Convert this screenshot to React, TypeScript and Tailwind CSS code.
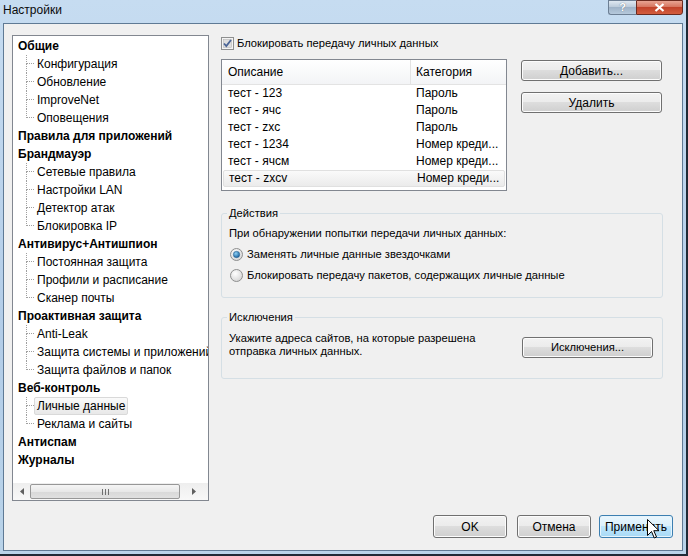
import React from 'react';

const tree: { title: string; items: string[] }[] = [
  { title: 'Общие', items: ['Конфигурация', 'Обновление', 'ImproveNet', 'Оповещения'] },
  { title: 'Правила для приложений', items: [] },
  { title: 'Брандмауэр', items: ['Сетевые правила', 'Настройки LAN', 'Детектор атак', 'Блокировка IP'] },
  { title: 'Антивирус+Антишпион', items: ['Постоянная защита', 'Профили и расписание', 'Сканер почты'] },
  { title: 'Проактивная защита', items: ['Anti-Leak', 'Защита системы и приложений', 'Защита файлов и папок'] },
  { title: 'Веб-контроль', items: ['Личные данные', 'Реклама и сайты'] },
  { title: 'Антиспам', items: [] },
  { title: 'Журналы', items: [] },
];

const rows = [
  ['тест - 123', 'Пароль'],
  ['тест - ячс', 'Пароль'],
  ['тест - zxc', 'Пароль'],
  ['тест - 1234', 'Номер креди...'],
  ['тест - ячсм', 'Номер креди...'],
  ['тест - zxcv', 'Номер креди...'],
];

const Button: React.FC<{ children: React.ReactNode; className?: string; focused?: boolean }> = ({
  children,
  className = '',
  focused = false,
}) => (
  <div
    className={`flex items-center justify-center rounded-[3px] border text-black ${
      focused
        ? 'border-[#3c7fb1] bg-[linear-gradient(#eaf6fd_0%,#d9f0fc_50%,#bee6fd_50%,#a7d9f5_100%)] shadow-[inset_0_0_0_1px_#e6f4fc]'
        : 'border-[#707070] bg-[linear-gradient(#f2f2f2_0%,#ebebeb_50%,#dddddd_50%,#cfcfcf_100%)] shadow-[inset_0_0_0_1px_#fcfcfc]'
    } ${className}`}
  >
    {children}
  </div>
);

const Checkbox = () => (
  <svg width="13" height="13" viewBox="0 0 13 13">
    <rect x="0.5" y="0.5" width="12" height="12" fill="#f4f4f4" stroke="#8e8f8f" />
    <rect x="2.5" y="2.5" width="8" height="8" fill="#dedede" stroke="#b0b0b0" strokeWidth="0.5" />
    <path d="M3 6.5 L5.3 9 L10 3" fill="none" stroke="#4a6496" strokeWidth="1.8" />
  </svg>
);

const Radio: React.FC<{ checked?: boolean }> = ({ checked = false }) => (
  <svg width="13" height="13" viewBox="0 0 13 13">
    <defs>
      <radialGradient id="rb" cx="0.4" cy="0.35" r="0.7">
        <stop offset="0" stopColor="#ffffff" />
        <stop offset="1" stopColor="#d4d4d4" />
      </radialGradient>
      <radialGradient id="rd" cx="0.4" cy="0.35" r="0.7">
        <stop offset="0" stopColor="#8fd1f5" />
        <stop offset="1" stopColor="#0f5a98" />
      </radialGradient>
    </defs>
    <circle cx="6.5" cy="6.5" r="6" fill="url(#rb)" stroke="#8e8f8f" />
    {checked && <circle cx="6.5" cy="6.5" r="3.2" fill="url(#rd)" stroke="#2a5c8a" strokeWidth="0.5" />}
  </svg>
);

const Cursor = () => (
  <svg width="13" height="21" viewBox="0 0 13 21" className="absolute left-[647px] top-[519px]">
    <path d="M0.5 0.5 L0.5 16.5 L4.5 12.5 L7.3 19 L9.5 18 L6.8 11.7 L12 11.7 Z" fill="#fff" stroke="#000" strokeWidth="1" />
  </svg>
);

const TreePanel = () => (
  <div className="flex h-[466px] w-[197px] flex-col border border-[#828790] bg-white">
    <div className="flex-1 overflow-hidden pl-[5px] pt-[1px]">
      {tree.map((g) => (
        <div key={g.title}>
          <div className="h-[18px] whitespace-nowrap font-bold leading-[18px]">{g.title}</div>
          {g.items.map((it, i) => {
            const last = i === g.items.length - 1;
            const selected = it === 'Личные данные';
            return (
              <div key={it} className="flex h-[18px] whitespace-nowrap pl-[8px] leading-[16px]">
                <div className="flex w-[8px] shrink-0 flex-col">
                  <div className="h-[9px] border-b border-l border-dotted border-[#a0a0a0]" />
                  <div className={`flex-1 ${last ? '' : 'border-l border-dotted border-[#a0a0a0]'}`} />
                </div>
                <span
                  className={`rounded-[2px] border px-[2px] ${
                    selected
                      ? 'border-[#d9d9d9] bg-[linear-gradient(#fafafa,#e8e8e8)]'
                      : 'border-transparent'
                  }`}
                >
                  {it}
                </span>
              </div>
            );
          })}
        </div>
      ))}
    </div>
    <div className="flex h-[17px] items-center bg-[linear-gradient(#eeeeee,#f8f8f8)]">
      <div className="flex w-[17px] justify-center">
        <svg width="4" height="7" viewBox="0 0 4 7">
          <path d="M4 0 L0 3.5 L4 7 Z" fill="#606060" />
        </svg>
      </div>
      <div className="flex h-[15px] w-[150px] items-center justify-center rounded-[2px] border border-[#979797] bg-[linear-gradient(#f5f5f5_0%,#e8e8e8_50%,#d8d8d8_50%,#e0e0e0_100%)]">
        <svg width="7" height="6" viewBox="0 0 7 6">
          <path d="M0.5 0 V6 M3.5 0 V6 M6.5 0 V6" stroke="#707070" strokeWidth="1" />
        </svg>
      </div>
      <div className="flex flex-1 justify-center">
        <svg width="4" height="7" viewBox="0 0 4 7">
          <path d="M0 0 L4 3.5 L0 7 Z" fill="#606060" />
        </svg>
      </div>
    </div>
  </div>
);

const DataTable = () => (
  <div className="h-[132px] w-[286px] border border-[#828790] bg-white">
    <div className="flex h-[25px] border-b border-[#e3e3e3] bg-[linear-gradient(#ffffff,#f3f4f6)]">
      <div className="flex w-[189px] items-center border-r border-[#e3e3e3] pl-[6px]">Описание</div>
      <div className="flex flex-1 items-center pl-[5px]">Категория</div>
    </div>
    {rows.map(([d, c], i) => {
      const hot = i === rows.length - 1;
      return (
        <div
          key={d}
          className={`flex h-[17px] items-center leading-[17px] ${
            hot ? 'mx-[1px] rounded-[2px] border border-[#e0e0e0] bg-[linear-gradient(#fafafa,#ebebeb)]' : ''
          }`}
        >
          <div className={`${hot ? 'w-[188px] pl-[5px]' : 'w-[189px] pl-[6px]'} whitespace-nowrap`}>{d}</div>
          <div className="whitespace-nowrap pl-[5px]">{c}</div>
        </div>
      );
    })}
  </div>
);

export default function App() {
  return (
    <div
      className="relative h-[556px] w-[688px] overflow-hidden bg-[#1f2a36] text-[12px] text-black"
      style={{ fontFamily: '"Liberation Sans", Arial, sans-serif' }}
    >
      <div className="flex h-[554px] w-[686px] flex-col bg-[linear-gradient(#c6dcf1,#b3cde8_60%,#b9d3e9)] px-[3px] pb-[3px]">
        {/* title bar */}
        <div className="-mx-[3px] flex h-[23px] items-start justify-between pr-[3px]">
          <div className="pl-[3px] pt-[2px] leading-[16px] text-[#0a0a0a]">Настройки</div>
          <div className="flex">
            <div className="flex h-[15px] w-[28px] items-center justify-center rounded-bl-[3px] border border-r-0 border-[#6d7f94] bg-[linear-gradient(#dfe8f1,#b8c8d8_50%,#9fb3c8_50%,#b6c9dc)] text-[11px] font-bold leading-none text-white [text-shadow:0_0_1px_#44566b]">
              ?
            </div>
            <div className="flex h-[15px] w-[47px] items-center justify-center rounded-br-[3px] border border-[#6b2a1f] bg-[linear-gradient(#e8a493,#d5705a_50%,#c2432b_50%,#d35d3e)]">
              <svg width="11" height="9" viewBox="0 0 11 9">
                <path d="M1.5 1 L9.5 8 M9.5 1 L1.5 8" stroke="#fff" strokeWidth="2.2" />
              </svg>
            </div>
          </div>
        </div>

        {/* client area */}
        <div className="flex flex-1 flex-col border border-[#5f7a95] bg-[#f0f0f0] pl-[8px] pr-[8px] pt-[11px]">
          <div className="flex">
            <TreePanel />

            <div className="ml-[12px] flex w-[442px] flex-col">
              <div className="mt-[1px] flex h-[14px] items-center">
                <Checkbox />
                <span className="ml-[3px] text-[11.2px] leading-[14px]">Блокировать передачу личных данных</span>
              </div>

              <div className="mt-[9px] flex">
                <DataTable />
                <div className="ml-[14px] flex flex-col pt-[1px]">
                  <Button className="h-[21px] w-[141px]">Добавить...</Button>
                  <Button className="mt-[11px] h-[21px] w-[141px]">Удалить</Button>
                </div>
              </div>

              <fieldset className="mt-[15px] h-[92px] w-[442px] rounded-[3px] border border-[#d5dfe5] pl-[7px] text-[11.2px]">
                <legend className="-ml-[2px] px-[2px] leading-[15px]">Действия</legend>
                <div className="mt-[5px] leading-[15px]">При обнаружении попытки передачи личных данных:</div>
                <div className="mt-[6px] flex h-[15px] items-center pl-[1px]">
                  <Radio checked />
                  <span className="ml-[4px]">Заменять личные данные звездочками</span>
                </div>
                <div className="mt-[6px] flex h-[15px] items-center pl-[1px]">
                  <Radio />
                  <span className="ml-[4px]">Блокировать передачу пакетов, содержащих личные данные</span>
                </div>
              </fieldset>

              <fieldset className="mt-[12px] h-[69px] w-[442px] rounded-[3px] border border-[#d5dfe5] pl-[7px] text-[11.2px]">
                <legend className="-ml-[2px] px-[2px] leading-[15px]">Исключения</legend>
                <div className="mt-[7px] flex items-start">
                  <div className="w-[290px] leading-[13px]">
                    Укажите адреса сайтов, на которые разрешена
                    <br />
                    отправка личных данных.
                  </div>
                  <Button className="ml-[3px] mt-[5px] h-[21px] w-[131px]">Исключения...</Button>
                </div>
              </fieldset>
            </div>
          </div>

          <div className="mt-[14px] flex justify-end gap-[10px] pr-[1px]">
            <Button className="h-[23px] w-[74px]">OK</Button>
            <Button className="h-[23px] w-[74px]">Отмена</Button>
            <Button focused className="-ml-[2px] h-[23px] w-[74px]">
              Применить
            </Button>
          </div>
        </div>
      </div>
      <Cursor />
    </div>
  );
}
